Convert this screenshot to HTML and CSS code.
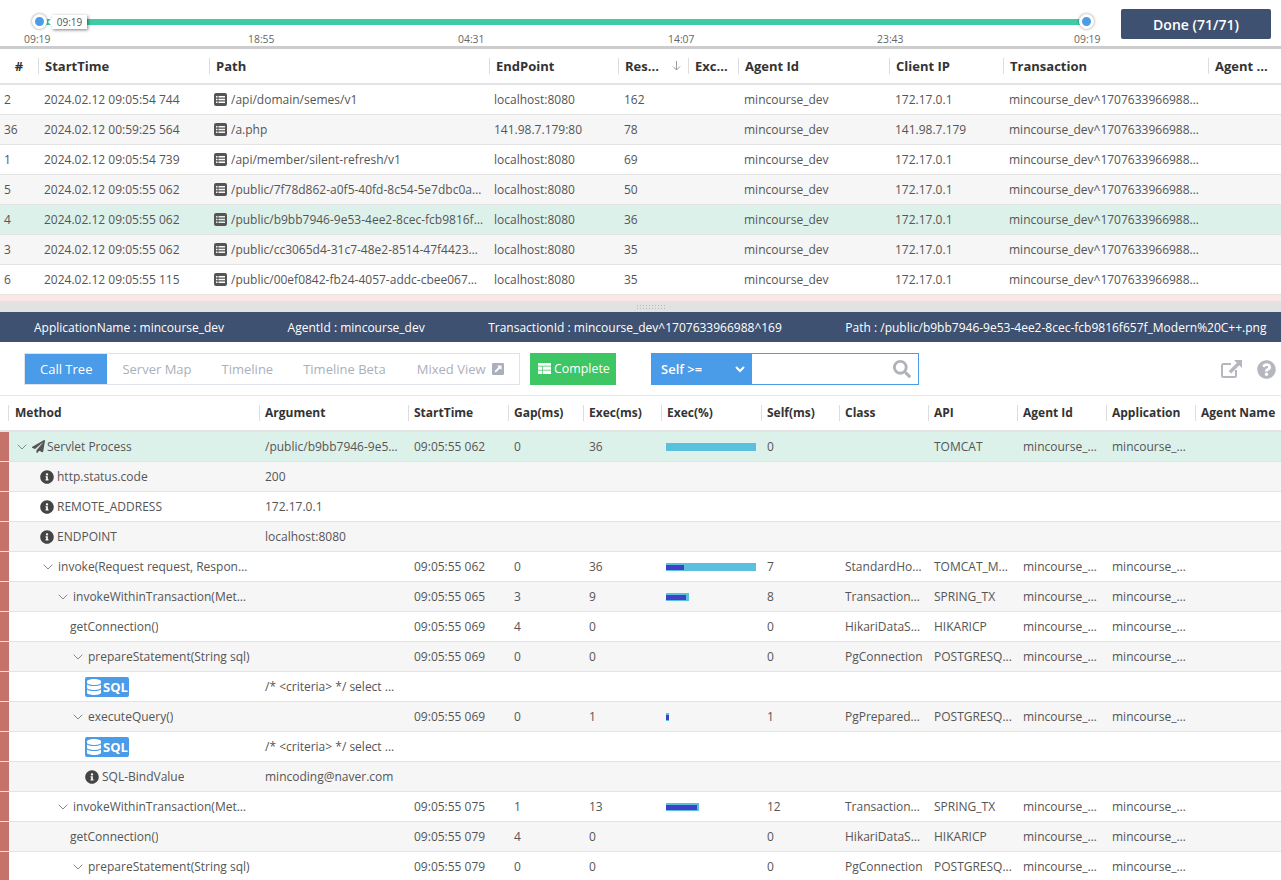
FILE: index.html
```html
<!DOCTYPE html>
<html lang="en">
<head>
<meta charset="utf-8">
<title>Transaction List</title>
<link rel="stylesheet" href="styles.css">
</head>
<body>
<svg class="defs" aria-hidden="true">
  <symbol id="i-info" viewBox="0 0 512 512"><path d="M256 8C119.043 8 8 119.083 8 256c0 136.997 111.043 248 248 248s248-111.003 248-248C504 119.083 392.957 8 256 8zm0 110c23.196 0 42 18.804 42 42s-18.804 42-42 42-42-18.804-42-42 18.804-42 42-42zm56 254c0 6.627-5.373 12-12 12h-88c-6.627 0-12-5.373-12-12v-24c0-6.627 5.373-12 12-12h12v-64h-12c-6.627 0-12-5.373-12-12v-24c0-6.627 5.373-12 12-12h64c6.627 0 12 5.373 12 12v100h12c6.627 0 12 5.373 12 12v24z"/></symbol>
  <symbol id="i-db" viewBox="0 0 448 512"><path d="M448 73.143v45.714C448 159.143 347.667 192 224 192S0 159.143 0 118.857V73.143C0 32.857 100.333 0 224 0s224 32.857 224 73.143zM448 176v102.857C448 319.143 347.667 352 224 352S0 319.143 0 278.857V176c48.125 33.143 136.208 48.572 224 48.572S399.874 209.143 448 176zm0 160v102.857C448 479.143 347.667 512 224 512S0 479.143 0 438.857V336c48.125 33.143 136.208 48.572 224 48.572S399.874 369.143 448 336z"/></symbol>
  <symbol id="i-chev" viewBox="0 0 10 6"><path d="M.7.7 5 5 9.3.7" fill="none" stroke="currentColor" stroke-width="1"/></symbol>
  <symbol id="i-list" viewBox="0 0 13 13"><path fill-rule="evenodd" d="M2 0h9a2 2 0 0 1 2 2v9a2 2 0 0 1-2 2H2a2 2 0 0 1-2-2V2a2 2 0 0 1 2-2zM2 3v1.500h1.500V3zM4.500 3v1.500H11V3zM2 5.700v1.500h1.500V5.700zM4.500 5.700v1.500H11V5.700zM2 8.400v1.500h1.500V8.400zM4.500 8.400v1.500H11V8.400z"/></symbol>
  <symbol id="i-plane" viewBox="0 0 512 512"><path d="M476 3.200 12.500 270.600c-18.100 10.400-15.800 35.600 2.200 43.200L121 358.400l287.300-253.200c5.500-4.900 13.300 2.600 8.600 8.300L176 407v80.500c0 23.600 28.500 32.900 42.500 15.800L282 426l124.600 52.200c14.200 6 30.400-2.900 33-18.200l72-432C515 7.800 493.300-6.800 476 3.200z"/></symbol>
</svg>

<header class="timeline">
  <div class="range">
    <div class="track"></div>
    <span class="handle handle-start"></span>
    <span class="handle handle-end"></span>
    <span class="tip">09:19</span>
    <div class="ticks">
      <span>09:19</span><span>18:55</span><span>04:31</span><span>14:07</span><span>23:43</span><span>09:19</span>
    </div>
  </div>
  <button class="done">Done (71/71)</button>
</header>

<section class="list">
  <div class="lrow lhead">
    <div class="hc hc-num"><span>#</span></div>
    <div class="hc"><span>StartTime</span></div>
    <div class="hc"><span>Path</span></div>
    <div class="hc"><span>EndPoint</span></div>
    <div class="hc"><span>Res...<svg class="sort" viewBox="0 0 9 10"><path d="M4.500 0v9M1 5.500l3.500 3.500L8 5.500" fill="none" stroke="currentColor"/></svg></span></div>
    <div class="hc"><span>Exc...</span></div>
    <div class="hc"><span>Agent Id</span></div>
    <div class="hc"><span>Client IP</span></div>
    <div class="hc"><span>Transaction</span></div>
    <div class="hc"><span>Agent ...</span></div>
  </div>
  <div class="lrow"><div class="c c-num">2</div><div class="c">2024.02.12 09:05:54 744</div><div class="c c-path"><svg class="ic-list"><use href="#i-list"/></svg><span class="tx">/api/domain/semes/v1</span></div><div class="c c-ep">localhost:8080</div><div class="c">162</div><div class="c"></div><div class="c">mincourse_dev</div><div class="c">172.17.0.1</div><div class="c">mincourse_dev^1707633966988^169</div><div class="c"></div></div>
  <div class="lrow"><div class="c c-num">36</div><div class="c">2024.02.12 00:59:25 564</div><div class="c c-path"><svg class="ic-list"><use href="#i-list"/></svg><span class="tx">/a.php</span></div><div class="c c-ep">141.98.7.179:80</div><div class="c">78</div><div class="c"></div><div class="c">mincourse_dev</div><div class="c">141.98.7.179</div><div class="c">mincourse_dev^1707633966988^169</div><div class="c"></div></div>
  <div class="lrow"><div class="c c-num">1</div><div class="c">2024.02.12 09:05:54 739</div><div class="c c-path"><svg class="ic-list"><use href="#i-list"/></svg><span class="tx">/api/member/silent-refresh/v1</span></div><div class="c c-ep">localhost:8080</div><div class="c">69</div><div class="c"></div><div class="c">mincourse_dev</div><div class="c">172.17.0.1</div><div class="c">mincourse_dev^1707633966988^169</div><div class="c"></div></div>
  <div class="lrow"><div class="c c-num">5</div><div class="c">2024.02.12 09:05:55 062</div><div class="c c-path"><svg class="ic-list"><use href="#i-list"/></svg><span class="tx">/public/7f78d862-a0f5-40fd-8c54-5e7dbc0a1f6d_Modern.png</span></div><div class="c c-ep">localhost:8080</div><div class="c">50</div><div class="c"></div><div class="c">mincourse_dev</div><div class="c">172.17.0.1</div><div class="c">mincourse_dev^1707633966988^169</div><div class="c"></div></div>
  <div class="lrow is-sel"><div class="c c-num">4</div><div class="c">2024.02.12 09:05:55 062</div><div class="c c-path"><svg class="ic-list"><use href="#i-list"/></svg><span class="tx">/public/b9bb7946-9e53-4ee2-8cec-fcb9816f657f_Modern%20C++.png</span></div><div class="c c-ep">localhost:8080</div><div class="c">36</div><div class="c"></div><div class="c">mincourse_dev</div><div class="c">172.17.0.1</div><div class="c">mincourse_dev^1707633966988^169</div><div class="c"></div></div>
  <div class="lrow"><div class="c c-num">3</div><div class="c">2024.02.12 09:05:55 062</div><div class="c c-path"><svg class="ic-list"><use href="#i-list"/></svg><span class="tx">/public/cc3065d4-31c7-48e2-8514-47f4423a9d10_Modern.png</span></div><div class="c c-ep">localhost:8080</div><div class="c">35</div><div class="c"></div><div class="c">mincourse_dev</div><div class="c">172.17.0.1</div><div class="c">mincourse_dev^1707633966988^169</div><div class="c"></div></div>
  <div class="lrow"><div class="c c-num">6</div><div class="c">2024.02.12 09:05:55 115</div><div class="c c-path"><svg class="ic-list"><use href="#i-list"/></svg><span class="tx">/public/00ef0842-fb24-4057-addc-cbee0671a2b3_Modern.png</span></div><div class="c c-ep">localhost:8080</div><div class="c">35</div><div class="c"></div><div class="c">mincourse_dev</div><div class="c">172.17.0.1</div><div class="c">mincourse_dev^1707633966988^169</div><div class="c"></div></div>
  <div class="lrow-error"></div>
</section>

<div class="splitter"><span class="grip"></span></div>

<div class="infobar">
  <span>ApplicationName : mincourse_dev</span>
  <span>AgentId : mincourse_dev</span>
  <span>TransactionId : mincourse_dev^1707633966988^169</span>
  <span>Path : /public/b9bb7946-9e53-4ee2-8cec-fcb9816f657f_Modern%20C++.png</span>
</div>

<div class="toolbar">
  <nav class="tabs">
    <a class="tab is-active">Call Tree</a>
    <a class="tab">Server Map</a>
    <a class="tab">Timeline</a>
    <a class="tab">Timeline Beta</a>
    <a class="tab tab-mixed">Mixed View<svg class="ic-ext" viewBox="0 0 12 12"><path fill-rule="evenodd" d="M1 0h10a1 1 0 0 1 1 1v10a1 1 0 0 1-1 1H1a1 1 0 0 1-1-1V1a1 1 0 0 1 1-1zm4 2.500 1.600 1.600L2.500 8.200l1.300 1.300 4.100-4.100L9.500 7V2.500z"/></svg></a>
  </nav>
  <button class="complete"><svg class="ic-table" viewBox="0 0 13 11"><path d="M0 0h13v2.800H0zM0 3.400h4v3.300H0zM4.700 3.400H13v3.300H4.700zM0 7.400h4V11H0zM4.700 7.400H13V11H4.700z"/></svg>Complete</button>
  <div class="search">
    <div class="search-sel"><span>Self &gt;=</span><svg class="ic-sel" viewBox="0 0 10 7"><path d="M1 1l4 4 4-4" fill="none" stroke="currentColor" stroke-width="2"/></svg></div>
    <div class="search-box"><svg class="ic-search" viewBox="0 0 512 512"><path d="M505 442.700 405.300 343c-4.500-4.500-10.600-7-17-7H372c27.600-35.300 44-79.700 44-128C416 93.100 322.900 0 208 0S0 93.100 0 208s93.100 208 208 208c48.300 0 92.700-16.400 128-44v16.300c0 6.400 2.500 12.500 7 17l99.700 99.700c9.400 9.400 24.600 9.400 33.900 0l28.300-28.300c9.400-9.400 9.400-24.600.1-34zM208 336c-70.700 0-128-57.200-128-128 0-70.700 57.200-128 128-128 70.700 0 128 57.200 128 128 0 70.700-57.200 128-128 128z"/></svg></div>
  </div>
  <div class="tools">
    <svg class="ic-open" viewBox="0 0 21 18"><path d="M10 4H2.500A1.500 1.500 0 0 0 1 5.500v10A1.500 1.500 0 0 0 2.500 17h11a1.500 1.500 0 0 0 1.500-1.500V10" fill="none" stroke="currentColor" stroke-width="2"/><path d="M13 0h8v8l-2.800-2.800-8 8.200-2.500-2.500 8.200-8z"/></svg>
    <svg class="ic-help" viewBox="0 0 512 512"><path d="M504 256c0 136.997-111.043 248-248 248S8 392.997 8 256C8 119.083 119.043 8 256 8s248 111.083 248 248zM262.655 90c-54.497 0-89.255 22.957-116.549 63.758-3.536 5.286-2.353 12.415 2.715 16.258l34.699 26.310c5.205 3.947 12.621 3.008 16.665-2.122 17.864-22.658 30.113-35.797 57.303-35.797 20.429 0 45.698 13.148 45.698 32.958 0 14.976-12.363 22.667-32.534 33.976C247.128 238.528 216 254.941 216 296v4c0 6.627 5.373 12 12 12h56c6.627 0 12-5.373 12-12v-1.333c0-28.462 83.186-29.647 83.186-106.667 0-58.002-60.165-102-116.531-102zM256 338c-25.365 0-46 20.635-46 46 0 25.364 20.635 46 46 46s46-20.636 46-46c0-25.365-20.635-46-46-46z"/></svg>
  </div>
</div>

<section class="tree">
  <div class="trow thead">
    <div class="hc"><span>Method</span></div><div class="hc"><span>Argument</span></div><div class="hc"><span>StartTime</span></div><div class="hc"><span>Gap(ms)</span></div><div class="hc"><span>Exec(ms)</span></div><div class="hc"><span>Exec(%)</span></div><div class="hc"><span>Self(ms)</span></div><div class="hc"><span>Class</span></div><div class="hc"><span>API</span></div><div class="hc"><span>Agent Id</span></div><div class="hc"><span>Application</span></div><div class="hc"><span>Agent Name</span></div>
  </div>

  <div class="trow is-sel"><div class="mark"></div><div class="m m-0"><svg class="chev"><use href="#i-chev"/></svg><svg class="ic-plane"><use href="#i-plane"/></svg><span class="tx">Servlet Process</span></div><div class="c">/public/b9bb7946-9e53-4ee2-8cec-fcb9816f657f</div><div class="c">09:05:55 062</div><div class="c">0</div><div class="c">36</div><div class="bar-cell"><div class="bar" style="width:90px"></div></div><div class="c">0</div><div class="c"></div><div class="c">TOMCAT</div><div class="c">mincourse_dev</div><div class="c">mincourse_dev</div><div class="c"></div></div>

  <div class="trow"><div class="mark"></div><div class="m m-info"><svg class="ic-info"><use href="#i-info"/></svg><span class="tx">http.status.code</span></div><div class="c">200</div><div class="c"></div><div class="c"></div><div class="c"></div><div class="c"></div><div class="c"></div><div class="c"></div><div class="c"></div><div class="c"></div><div class="c"></div><div class="c"></div></div>

  <div class="trow"><div class="mark"></div><div class="m m-info"><svg class="ic-info"><use href="#i-info"/></svg><span class="tx">REMOTE_ADDRESS</span></div><div class="c">172.17.0.1</div><div class="c"></div><div class="c"></div><div class="c"></div><div class="c"></div><div class="c"></div><div class="c"></div><div class="c"></div><div class="c"></div><div class="c"></div><div class="c"></div></div>

  <div class="trow"><div class="mark"></div><div class="m m-info"><svg class="ic-info"><use href="#i-info"/></svg><span class="tx">ENDPOINT</span></div><div class="c">localhost:8080</div><div class="c"></div><div class="c"></div><div class="c"></div><div class="c"></div><div class="c"></div><div class="c"></div><div class="c"></div><div class="c"></div><div class="c"></div><div class="c"></div></div>

  <div class="trow"><div class="mark"></div><div class="m m-1"><svg class="chev"><use href="#i-chev"/></svg><span class="tx">invoke(Request request, Response response)</span></div><div class="c"></div><div class="c">09:05:55 062</div><div class="c">0</div><div class="c">36</div><div class="bar-cell"><div class="bar" style="width:90px"><div class="bar-self" style="width:18px"></div></div></div><div class="c">7</div><div class="c">StandardHostValve</div><div class="c">TOMCAT_M...</div><div class="c">mincourse_dev</div><div class="c">mincourse_dev</div><div class="c"></div></div>

  <div class="trow"><div class="mark"></div><div class="m m-2"><svg class="chev"><use href="#i-chev"/></svg><span class="tx">invokeWithinTransaction(Method method, Class targetClass)</span></div><div class="c"></div><div class="c">09:05:55 065</div><div class="c">3</div><div class="c">9</div><div class="bar-cell"><div class="bar" style="width:23px"><div class="bar-self" style="width:20px"></div></div></div><div class="c">8</div><div class="c">TransactionInterceptor</div><div class="c">SPRING_TX</div><div class="c">mincourse_dev</div><div class="c">mincourse_dev</div><div class="c"></div></div>

  <div class="trow"><div class="mark"></div><div class="m m-3"><span class="tx">getConnection()</span></div><div class="c"></div><div class="c">09:05:55 069</div><div class="c">4</div><div class="c">0</div><div class="bar-cell"></div><div class="c">0</div><div class="c">HikariDataSource</div><div class="c">HIKARICP</div><div class="c">mincourse_dev</div><div class="c">mincourse_dev</div><div class="c"></div></div>

  <div class="trow"><div class="mark"></div><div class="m m-4"><svg class="chev"><use href="#i-chev"/></svg><span class="tx">prepareStatement(String sql)</span></div><div class="c"></div><div class="c">09:05:55 069</div><div class="c">0</div><div class="c">0</div><div class="bar-cell"></div><div class="c">0</div><div class="c">PgConnection</div><div class="c">POSTGRESQ...</div><div class="c">mincourse_dev</div><div class="c">mincourse_dev</div><div class="c"></div></div>

  <div class="trow"><div class="mark"></div><div class="m m-5"><span class="sql"><svg class="ic-db"><use href="#i-db"/></svg>SQL</span></div><div class="c">/* &lt;criteria&gt; */ select ...</div><div class="c"></div><div class="c"></div><div class="c"></div><div class="c"></div><div class="c"></div><div class="c"></div><div class="c"></div><div class="c"></div><div class="c"></div><div class="c"></div></div>

  <div class="trow"><div class="mark"></div><div class="m m-4"><svg class="chev"><use href="#i-chev"/></svg><span class="tx">executeQuery()</span></div><div class="c"></div><div class="c">09:05:55 069</div><div class="c">0</div><div class="c">1</div><div class="bar-cell"><div class="bar" style="width:3px"><div class="bar-self" style="width:3px"></div></div></div><div class="c">1</div><div class="c">PgPreparedStatement</div><div class="c">POSTGRESQ...</div><div class="c">mincourse_dev</div><div class="c">mincourse_dev</div><div class="c"></div></div>

  <div class="trow"><div class="mark"></div><div class="m m-5"><span class="sql"><svg class="ic-db"><use href="#i-db"/></svg>SQL</span></div><div class="c">/* &lt;criteria&gt; */ select ...</div><div class="c"></div><div class="c"></div><div class="c"></div><div class="c"></div><div class="c"></div><div class="c"></div><div class="c"></div><div class="c"></div><div class="c"></div><div class="c"></div></div>

  <div class="trow"><div class="mark"></div><div class="m m-5"><svg class="ic-info"><use href="#i-info"/></svg><span class="tx">SQL-BindValue</span></div><div class="c">mincoding@naver.com</div><div class="c"></div><div class="c"></div><div class="c"></div><div class="c"></div><div class="c"></div><div class="c"></div><div class="c"></div><div class="c"></div><div class="c"></div><div class="c"></div></div>

  <div class="trow"><div class="mark"></div><div class="m m-2"><svg class="chev"><use href="#i-chev"/></svg><span class="tx">invokeWithinTransaction(Method method, Class targetClass)</span></div><div class="c"></div><div class="c">09:05:55 075</div><div class="c">1</div><div class="c">13</div><div class="bar-cell"><div class="bar" style="width:33px"><div class="bar-self" style="width:31px"></div></div></div><div class="c">12</div><div class="c">TransactionInterceptor</div><div class="c">SPRING_TX</div><div class="c">mincourse_dev</div><div class="c">mincourse_dev</div><div class="c"></div></div>

  <div class="trow"><div class="mark"></div><div class="m m-3"><span class="tx">getConnection()</span></div><div class="c"></div><div class="c">09:05:55 079</div><div class="c">4</div><div class="c">0</div><div class="bar-cell"></div><div class="c">0</div><div class="c">HikariDataSource</div><div class="c">HIKARICP</div><div class="c">mincourse_dev</div><div class="c">mincourse_dev</div><div class="c"></div></div>

  <div class="trow"><div class="mark"></div><div class="m m-4"><svg class="chev"><use href="#i-chev"/></svg><span class="tx">prepareStatement(String sql)</span></div><div class="c"></div><div class="c">09:05:55 079</div><div class="c">0</div><div class="c">0</div><div class="bar-cell"></div><div class="c">0</div><div class="c">PgConnection</div><div class="c">POSTGRESQ...</div><div class="c">mincourse_dev</div><div class="c">mincourse_dev</div><div class="c"></div></div>
</section>
</body>
</html>
```

FILE: styles.css
```css
* { box-sizing: border-box; }
html, body { margin: 0; height: 100%; }
body {
  height: 880px;
  overflow: hidden;
  background: #fff;
  color: #555;
  font-family: "Open Sans", "Noto Sans", sans-serif;
  font-size: 12px;
}
.defs { display: none; }

/* timeline */
.timeline {
  height: 49px;
  border-bottom: 3px solid #ccc;
  display: flex;
  padding: 9px 10px 0 24px;
}
.range {
  position: relative;
  width: 1078px;
  height: 37px;
}
.track {
  margin: 10px 0 0 20px;
  width: 1042px;
  height: 6px;
  background: #3fcba6;
}
.handle {
  position: absolute;
  top: 5px;
  width: 15px;
  height: 15px;
  border-radius: 50%;
  background: #4a9be8;
  border: 3px solid #fff;
  box-shadow: 0 0 3px rgba(0,0,0,.45);
}
.handle-start { left: 8px; }
.handle-end { left: 1055px; }
.tip {
  position: absolute;
  left: 28px;
  top: 6px;
  width: 35px;
  height: 14px;
  background: #fff;
  box-shadow: 1px 1px 3px rgba(0,0,0,.5);
  font-size: 10px;
  line-height: 14px;
  text-align: center;
  color: #555;
}
.tip::before {
  content: "";
  position: absolute;
  left: -4px;
  top: 3px;
  border-style: solid;
  border-width: 4px 4px 4px 0;
  border-color: transparent #fff transparent transparent;
}
.ticks {
  display: grid;
  grid-template-columns: 224px 210px 210px 209px 197px 28px;
  margin-top: 7px;
  font-size: 10.4px;
  line-height: 14px;
  color: #666;
}
.done {
  margin-left: 19px;
  width: 150px;
  height: 30px;
  border: 0;
  border-radius: 2px;
  background: #3f5170;
  color: #fff;
  font: 600 14px "Open Sans", sans-serif;
}

/* transaction list */
.lrow {
  display: grid;
  grid-template-columns: 38px 171px 280px 129px 70px 50px 151px 114px 205px 73px;
  height: 30px;
  align-items: center;
  border-bottom: 1px solid #e3e3e3;
}
.lrow:nth-child(odd) { background: #f6f6f6; }
.lrow.lhead {
  height: 36px;
  background: #fff;
  border-bottom: 2px solid #e3e3e3;
}
.lrow-error { height: 6px; background: #fde6e6; }
.hc {
  color: #333;
  font-size: 13px;
  font-weight: 700;
  min-width: 0;
  white-space: nowrap;
}
.hc span {
  display: block;
  height: 16px;
  line-height: 16px;
  padding-left: 6px;
  border-left: 1px solid #ddd;
  position: relative;
}
.hc-num span { border: 0; padding: 0; text-align: center; }
.sort { position: absolute; left: 53px; top: 3px; width: 9px; height: 10px; color: #999; }
.c {
  padding: 0 8px 0 6px;
  white-space: nowrap;
  overflow: hidden;
  text-overflow: ellipsis;
  min-width: 0;
  line-height: 16px;
}
.trow .c { padding-right: 5px; }
.lrow .c-num { padding-left: 4px; }
.lrow .c-ep { padding-left: 5px; }
.lrow .c-path { display: flex; align-items: center; gap: 4px; padding: 0 6px 0 5px; overflow: hidden; }
.tx { overflow: hidden; text-overflow: ellipsis; white-space: nowrap; min-width: 0; }
.ic-list { width: 13px; height: 13px; flex: none; fill: #555; }
.is-sel, .lrow:nth-child(odd).is-sel { background: #ddf1eb; }

.splitter {
  height: 11px;
  background: #e2e2e2;
  display: flex;
  justify-content: center;
  align-items: center;
}
.grip {
  width: 30px;
  height: 6px;
  margin-left: 20px;
  background: radial-gradient(#b5b5b5 40%, transparent 45%) 0 0 / 3px 3px;
}

/* info bar */
.infobar {
  height: 30px;
  background: #3f5170;
  color: #fff;
  display: flex;
  align-items: center;
  gap: 63.500px;
  padding-left: 34px;
  font-size: 12px;
  white-space: nowrap;
}

/* toolbar */
.toolbar {
  height: 54px;
  display: flex;
  align-items: flex-start;
  padding: 11px 5px 0 24px;
  border-bottom: 1px solid #e6e6e6;
}
.tabs {
  display: flex;
  width: 496px;
  height: 32px;
  border: 1px solid #dfe3ea;
  font-size: 13px;
  color: #aab0bb;
}
.tab {
  line-height: 30px;
  padding: 0 15px;
  display: flex;
  align-items: center;
}
.tab.is-active { background: #4a9be8; color: #fff; }
.tab-mixed { padding-left: 16px; padding-right: 0; }
.ic-ext { width: 12px; height: 12px; margin-left: 6px; fill: #aab0bb; }
.complete {
  margin-left: 10px;
  width: 86px;
  height: 32px;
  border: 0;
  background: #3ec564;
  color: #fff;
  font: 12.400px "Open Sans", sans-serif;
  display: flex;
  align-items: center;
  gap: 3px;
  padding: 0 0 1px 8px;
}
.ic-table { width: 13px; height: 11px; fill: #fff; }
.search {
  margin-left: 35px;
  width: 268px;
  height: 32px;
  display: flex;
  border: 1px solid #4a9be8;
}
.search-sel {
  width: 100px;
  background: #4a9be8;
  color: #fff;
  font-size: 13px;
  font-weight: 600;
  display: flex;
  align-items: center;
  justify-content: space-between;
  padding: 0 7px 0 9px;
}
.ic-sel { width: 10px; height: 7px; }
.search-box {
  flex: 1;
  display: flex;
  align-items: center;
  justify-content: flex-end;
  padding-right: 7px;
}
.ic-search { width: 18px; height: 18px; fill: #b0b4ba; }
.tools {
  margin-left: auto;
  display: flex;
  align-items: center;
  gap: 15px;
  height: 32px;
  color: #b4b8be;
}
.ic-open { width: 21px; height: 18px; fill: currentColor; }
.ic-help { width: 19px; height: 19px; fill: currentColor; }

/* call tree */
.trow {
  display: grid;
  grid-template-columns: 9px 250px 149px 100px 75px 78px 100px 78px 89px 89px 89px 89px 86px;
  height: 30px;
  align-items: center;
  border-bottom: 1px solid #e3e3e3;
}
.trow:nth-child(odd) { background: #f6f6f6; }
.trow.thead {
  height: 36px;
  padding: 0 0 1px 8px;
  grid-template-columns: 251px 149px 100px 75px 78px 100px 78px 89px 89px 89px 89px 75px;
  background: #fff;
  border-bottom: 2px solid #e3e3e3;
}
.thead .hc { font-size: 12px; }
.thead .hc span { padding-left: 5px; }
.thead .hc:first-child span { padding-left: 6px; }
.trow.is-sel { background: #ddf1eb; }
.mark {
  align-self: stretch;
  background: #c5736a;
}
.m {
  display: flex;
  align-items: center;
  min-width: 0;
  padding-right: 9px;
  height: 100%;
}
.m-0 { padding-left: 8px; }
.m-info { padding-left: 31px; }
.m-1 { padding-left: 34px; }
.m-2 { padding-left: 49px; }
.m-3 { padding-left: 61px; }
.m-4 { padding-left: 64px; }
.m-5 { padding-left: 76px; }
.chev { width: 10px; height: 6px; flex: none; margin-right: 5px; color: #888; }
.ic-plane { width: 13px; height: 13px; flex: none; fill: #555; margin-right: 2px; }
.ic-info { width: 14px; height: 14px; flex: none; fill: #444; margin-right: 3px; }
.sql {
  display: flex;
  align-items: center;
  gap: 2px;
  width: 44px;
  height: 20px;
  padding-left: 2px;
  border-radius: 2px;
  background: #4a9be8;
  color: #fff;
  font-size: 13px;
  font-weight: 700;
}
.ic-db { width: 14px; height: 16px; fill: #fff; flex: none; }
.bar-cell { padding-left: 5px; }
.bar { height: 8px; background: #5bc0de; padding-top: 2px; }
.bar-self { height: 5px; background: #4040c8; }
```
